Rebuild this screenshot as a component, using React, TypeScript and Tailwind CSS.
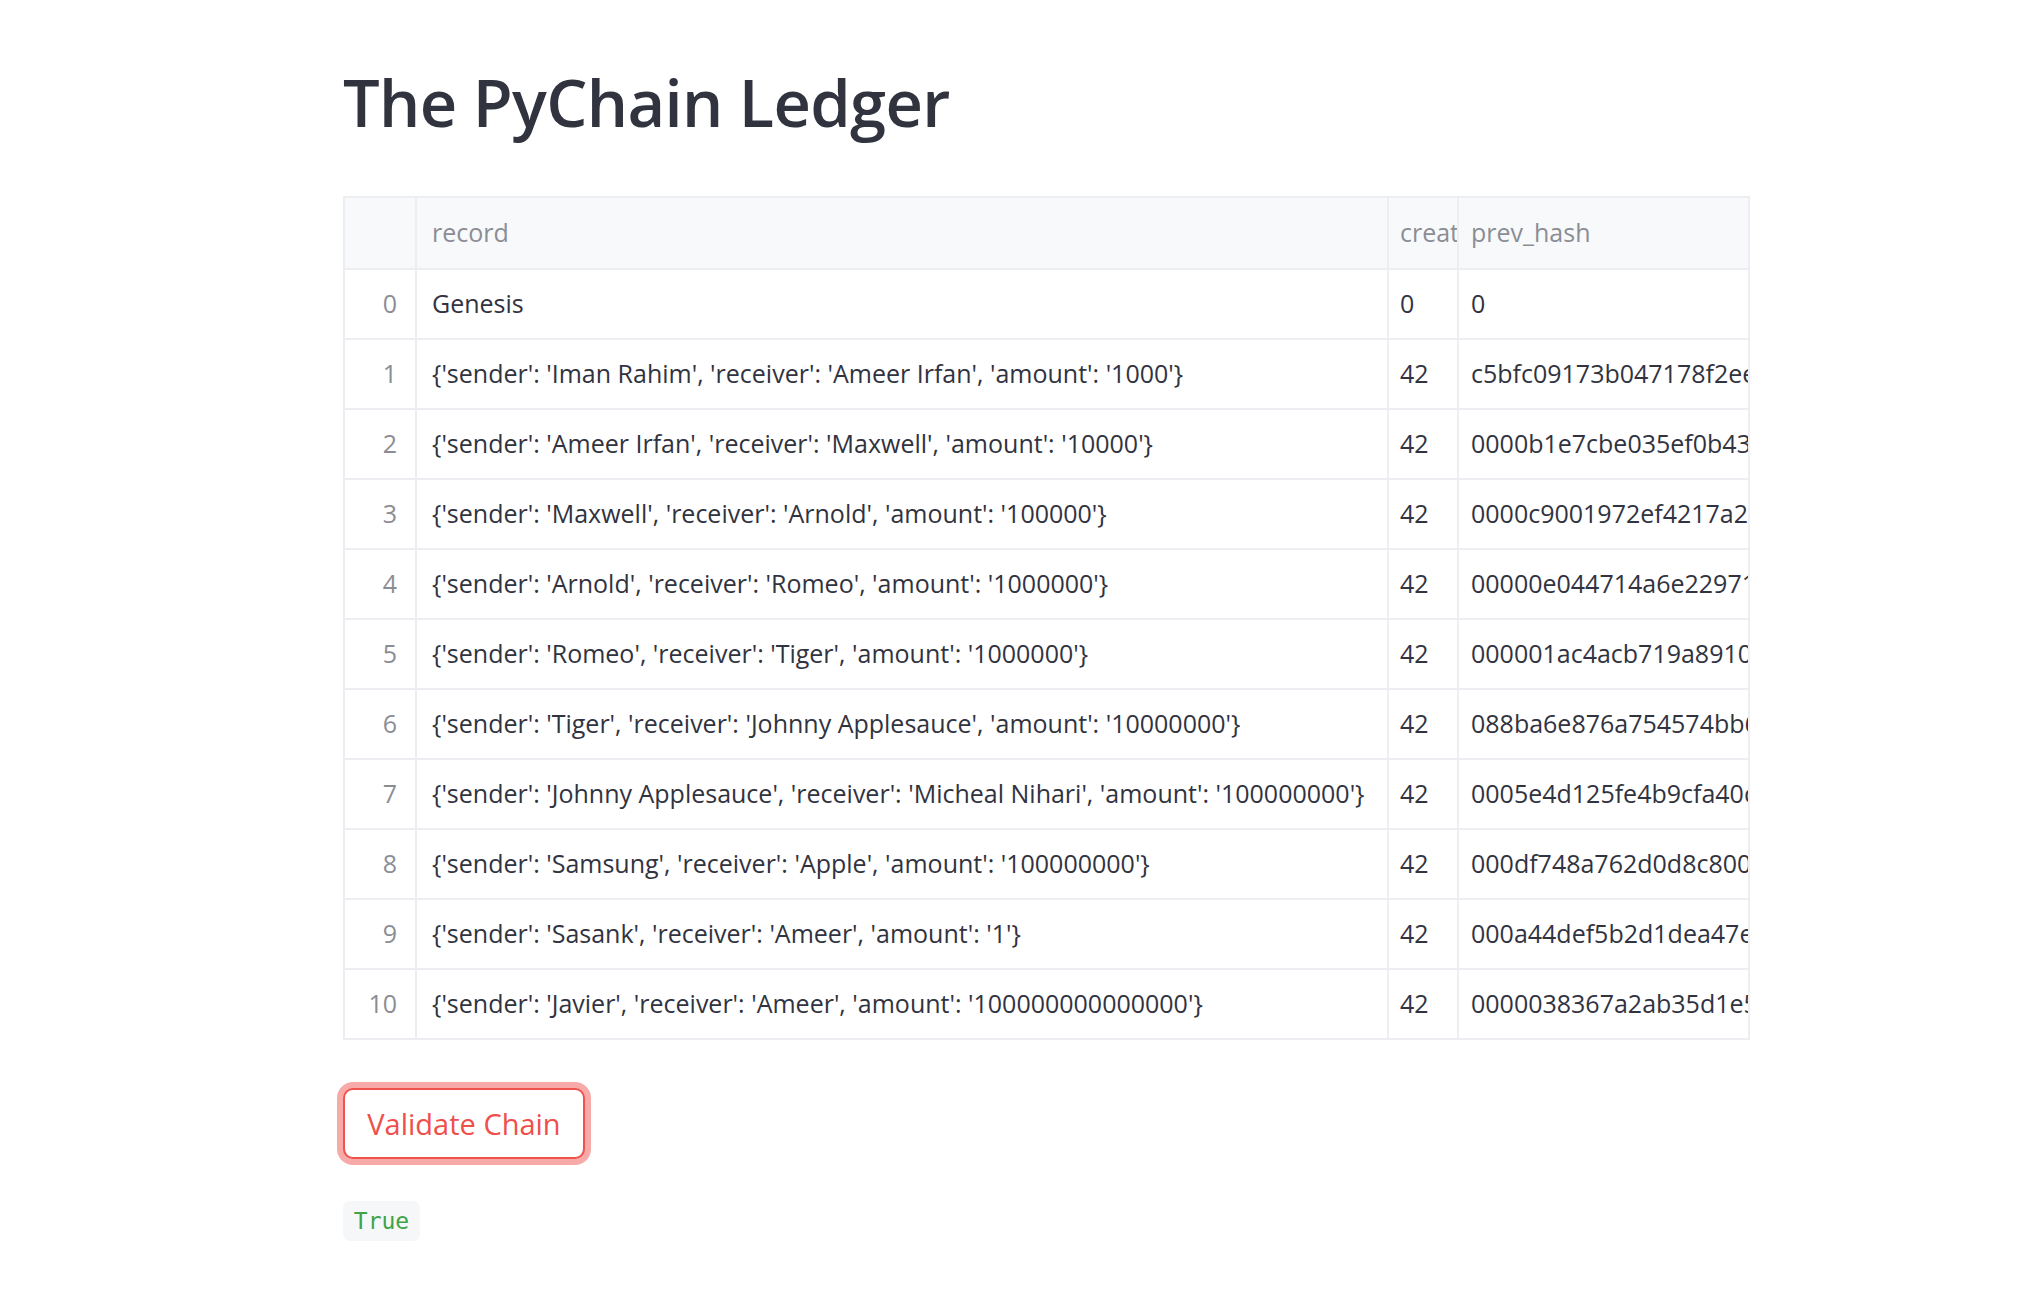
import React from "react";

interface Block {
  record: string;
  created: string;
  prevHash: string;
}

const blocks: Block[] = [
  { record: "Genesis", created: "0", prevHash: "0" },
  {
    record: "{'sender': 'Iman Rahim', 'receiver': 'Ameer Irfan', 'amount': '1000'}",
    created: "42",
    prevHash: "c5bfc09173b047178f2ee1d0a7c4e9b2",
  },
  {
    record: "{'sender': 'Ameer Irfan', 'receiver': 'Maxwell', 'amount': '10000'}",
    created: "42",
    prevHash: "0000b1e7cbe035ef0b43a9d2e1f07c55",
  },
  {
    record: "{'sender': 'Maxwell', 'receiver': 'Arnold', 'amount': '100000'}",
    created: "42",
    prevHash: "0000c9001972ef4217a2c8b3d91e4f60",
  },
  {
    record: "{'sender': 'Arnold', 'receiver': 'Romeo', 'amount': '1000000'}",
    created: "42",
    prevHash: "00000e044714a6e229718bd3c0f5a2e7",
  },
  {
    record: "{'sender': 'Romeo', 'receiver': 'Tiger', 'amount': '1000000'}",
    created: "42",
    prevHash: "000001ac4acb719a89103e5f7b2d6c40",
  },
  {
    record: "{'sender': 'Tiger', 'receiver': 'Johnny Applesauce', 'amount': '10000000'}",
    created: "42",
    prevHash: "088ba6e876a754574bb6f2c1d9e03a84",
  },
  {
    record:
      "{'sender': 'Johnny Applesauce', 'receiver': 'Micheal Nihari', 'amount': '100000000'}",
    created: "42",
    prevHash: "0005e4d125fe4b9cfa40c7a1e28b3d96",
  },
  {
    record: "{'sender': 'Samsung', 'receiver': 'Apple', 'amount': '100000000'}",
    created: "42",
    prevHash: "000df748a762d0d8c800b4e9f1a7c325",
  },
  {
    record: "{'sender': 'Sasank', 'receiver': 'Ameer', 'amount': '1'}",
    created: "42",
    prevHash: "000a44def5b2d1dea47e8c0b3f9d61a2",
  },
  {
    record: "{'sender': 'Javier', 'receiver': 'Ameer', 'amount': '100000000000000'}",
    created: "42",
    prevHash: "0000038367a2ab35d1e5f7c9a04b2e18",
  },
];

const cell = "h-[70px] flex items-center overflow-hidden whitespace-nowrap border-r-2 border-b-2 border-[#eceef1]";

const App = () => {
  return (
    <div
      className="min-h-screen bg-white text-[#31333f]"
      style={{ fontFamily: "'Open Sans', 'Noto Sans', sans-serif" }}
    >
      <div className="pl-[343px] pt-[56px] pb-[50px]">
        <h1 className="text-[65px] font-semibold leading-[92px] tracking-[-0.01em] text-[#31333f]">
          The PyChain Ledger
        </h1>

        <div className="mt-[48px] w-[1407px] border-l-2 border-t-2 border-[#eceef1] grid grid-cols-[72px_972px_70px_291px] text-[25px]">
          <div className={`${cell} h-[72px] bg-[#f8f9fb]`} />
          <div className={`${cell} h-[72px] bg-[#f8f9fb] px-[15px] text-[#8b8d95]`}>record</div>
          <div className={`${cell} h-[72px] bg-[#f8f9fb] pl-[11px] text-[#8b8d95]`}>created</div>
          <div className={`${cell} h-[72px] bg-[#f8f9fb] pl-[12px] text-[#8b8d95]`}>prev_hash</div>

          {blocks.map((b, i) => (
            <React.Fragment key={i}>
              <div className={`${cell} justify-end pr-[18px] text-[#8b8d95]`}>{i}</div>
              <div className={`${cell} px-[15px]`}>{b.record}</div>
              <div className={`${cell} pl-[11px]`}>{b.created}</div>
              <div className={`${cell} pl-[12px]`}>{b.prevHash}</div>
            </React.Fragment>
          ))}
        </div>

        <button className="mt-[48px] h-[71px] w-[242px] rounded-[10px] border-2 border-[#f0524d] bg-white text-[29px] text-[#ef4f4a] ring-[6px] ring-[#f7aaa7]">
          Validate Chain
        </button>

        <div className="mt-[42px]">
          <span
            className="inline-flex h-[40px] w-[77px] items-center justify-center rounded-[7px] bg-[#f6f7f9] text-[23px] text-[#3fa447]"
            style={{ fontFamily: "'DejaVu Sans Mono', 'Liberation Mono', monospace" }}
          >
            True
          </span>
        </div>
      </div>
    </div>
  );
};

export default App;
